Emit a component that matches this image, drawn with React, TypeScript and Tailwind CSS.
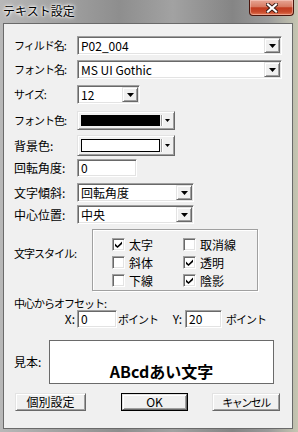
import React from "react";

const sunken =
  "border border-t-[#a0a0a0] border-l-[#a0a0a0] border-r-white border-b-white shadow-[inset_1px_1px_0_#696969,inset_-1px_-1px_0_#e3e3e3]";
const raised =
  "border border-t-[#e3e3e3] border-l-[#e3e3e3] border-r-[#696969] border-b-[#696969] shadow-[inset_1px_1px_0_#ffffff,inset_-1px_-1px_0_#a0a0a0]";
// katakana in MS UI Gothic is narrow, squeeze it a bit
const kana = "text-[11px] tracking-[-1px]";

function Arrow({ small }: { small?: boolean }) {
  if (small) {
    return (
      <svg width="5" height="3" viewBox="0 0 5 3">
        <path d="M0 0h5L2.5 3z" fill="#000" />
      </svg>
    );
  }
  return (
    <svg width="7" height="4" viewBox="0 0 7 4">
      <path d="M0 0h7L3.5 4z" fill="#000" />
    </svg>
  );
}

function Combo({ w, value }: { w: string; value: string }) {
  return (
    <div className={`${w} h-[19px] bg-white ${sunken} p-[1px] flex`}>
      <div className="flex-1 pl-[2px] leading-[15px] overflow-hidden whitespace-nowrap">{value}</div>
      <div className={`w-[16px] bg-[#f0f0f0] ${raised} flex items-center justify-center`}>
        <Arrow />
      </div>
    </div>
  );
}

function Field({ w, value }: { w: string; value: string }) {
  return (
    <div className={`${w} h-[18px] bg-white ${sunken} pl-[3px] leading-[16px] whitespace-nowrap`}>
      {value}
    </div>
  );
}

function ColorPick({ h, swatch }: { h: string; swatch: string }) {
  return (
    <div className={`w-[98px] ${h} bg-[#f0f0f0] ${raised} flex items-stretch pl-[3px] pr-[2px] py-[3px]`}>
      <div className={`flex-1 border border-black ${swatch}`} />
      <div className="ml-[1px] w-[2px] border-l border-[#a0a0a0] bg-white" />
      <div className="w-[9px] flex items-center justify-center">
        <Arrow small />
      </div>
    </div>
  );
}

function Check({ checked }: { checked?: boolean }) {
  return (
    <div className={`w-[13px] h-[13px] shrink-0 bg-white ${sunken} flex items-center justify-center`}>
      {checked && (
        <svg width="7" height="7" viewBox="0 0 7 7">
          <path d="M0 2.5 L2.5 5 L7 0.5 L7 3 L2.5 7 L0 5 Z" fill="#000" />
        </svg>
      )}
    </div>
  );
}

function Row({
  label,
  mt,
  h,
  narrow,
  children,
}: {
  label: string;
  mt: string;
  h: string;
  narrow?: boolean;
  children: React.ReactNode;
}) {
  return (
    <div className={`flex items-center ${mt} ${h}`}>
      <div className={`w-[63px] whitespace-nowrap ${narrow ? kana : ""}`}>{label}</div>
      {children}
    </div>
  );
}

const styles = [
  { label: "太字", checked: true },
  { label: "取消線", checked: false },
  { label: "斜体", checked: false },
  { label: "透明", checked: true },
  { label: "下線", checked: false },
  { label: "陰影", checked: true },
];

export default function App() {
  return (
    <div className="w-[298px] h-[432px] overflow-hidden flex flex-col text-[12px] text-black font-['MS_UI_Gothic','Noto_Sans_CJK_JP',sans-serif] bg-[linear-gradient(90deg,#b8b8b8_0%,#a4a4a4_18%,#8e8e8e_40%,#a2a2a2_58%,#858585_78%,#9a9a9a_90%,#c6c6b2_100%)]">
      {/* title bar */}
      <div className="h-[23px] shrink-0 flex items-start">
        <div className="ml-[3px] mt-[4px] leading-[14px] text-[12px] [text-shadow:0_0_5px_#fff,0_0_3px_#fff,0_0_2px_#fff]">
          テキスト設定
        </div>
        <div className="ml-auto mr-[4px] w-[45px] h-[16px] rounded-b-[4px] border border-t-0 border-[#4a150c] bg-[linear-gradient(180deg,#e7a594_0%,#d77a62_45%,#c13b1f_52%,#c84a2c_80%,#e47c5a_100%)] shadow-[inset_0_0_0_1px_rgba(255,220,210,0.45)] flex items-center justify-center">
          <svg width="12" height="10" viewBox="0 0 12 10">
            <path d="M2 1.5 L10 8.5 M10 1.5 L2 8.5" stroke="#3a1a14" strokeWidth="4" strokeLinecap="square" />
            <path d="M2 1.5 L10 8.5 M10 1.5 L2 8.5" stroke="#ffffff" strokeWidth="2.2" strokeLinecap="square" />
          </svg>
        </div>
      </div>

      {/* frame + client */}
      <div className="flex-1 flex pl-[3px] pr-[5px] pb-[3px]">
        <div className="flex-1 bg-[#f0f0f0] border border-[#6a6a6a] flex flex-col pl-[10px]">
          <Row label="フィルド名:" mt="mt-[12px]" h="h-[19px]" narrow>
            <Combo w="w-[205px]" value="P02_004" />
          </Row>
          <Row label="フォント名:" mt="mt-[5px]" h="h-[19px]" narrow>
            <Combo w="w-[205px]" value="MS UI Gothic" />
          </Row>
          <Row label="サイズ:" mt="mt-[6px]" h="h-[19px]" narrow>
            <Combo w="w-[63px]" value="12" />
          </Row>
          <Row label="フォント色:" mt="mt-[7px]" h="h-[19px]" narrow>
            <ColorPick h="h-[19px]" swatch="bg-black" />
          </Row>
          <Row label="背景色:" mt="mt-[5px]" h="h-[21px]">
            <ColorPick h="h-[21px]" swatch="bg-white" />
          </Row>
          <Row label="回転角度:" mt="mt-[3px]" h="h-[18px]">
            <Field w="w-[60px]" value="0" />
          </Row>
          <Row label="文字傾斜:" mt="mt-[6px]" h="h-[19px]">
            <Combo w="w-[117px]" value="回転角度" />
          </Row>
          <Row label="中心位置:" mt="mt-[3px]" h="h-[19px]">
            <Combo w="w-[117px]" value="中央" />
          </Row>

          {/* text style group */}
          <div className="mt-[5px] flex items-start">
            <div className={`w-[78px] mt-[17px] leading-[14px] whitespace-nowrap ${kana}`}>文字スタイル:</div>
            <div className="w-[166px] h-[62px] border border-[#a0a0a0] shadow-[inset_1px_1px_0_#ffffff,1px_1px_0_#ffffff] pl-[19px] pt-[8px] grid grid-cols-[71px_1fr] auto-rows-[18px]">
              {styles.map((s) => (
                <div key={s.label} className="flex items-start gap-[4px]">
                  <Check checked={s.checked} />
                  <span className="leading-[13px] whitespace-nowrap">{s.label}</span>
                </div>
              ))}
            </div>
          </div>

          <div className={`mt-[5px] h-[14px] leading-[14px] whitespace-nowrap ${kana}`}>中心からオフセット:</div>

          <div className="flex items-center h-[18px]">
            <div className="w-[63px] text-right pr-[2px]">X:</div>
            <Field w="w-[40px]" value="0" />
            <div className={`w-[48px] whitespace-nowrap pl-[1px] ${kana}`}>ポイント</div>
            <div className="w-[20px] text-right pr-[3px]">Y:</div>
            <Field w="w-[37px]" value="20" />
            <div className={`ml-[4px] whitespace-nowrap ${kana}`}>ポイント</div>
          </div>

          <div className="mt-[12px] flex items-center">
            <div className="w-[35px] whitespace-nowrap">見本:</div>
            <div className="w-[225px] h-[44px] bg-white border border-[#6a6a6a] overflow-hidden flex items-end justify-center">
              <span className="text-[16px] font-bold leading-[23px] font-['Noto_Sans_CJK_JP',sans-serif]">
                ABcdあい文字
              </span>
            </div>
          </div>

          <div className="mt-[9px] flex h-[18px]">
            <div className={`ml-[1px] w-[71px] ${raised} bg-[#f0f0f0] flex items-center justify-center leading-[14px]`}>
              個別設定
            </div>
            <div className="ml-[35px] w-[67px] border border-black">
              <div className={`w-full h-full ${raised} bg-[#f0f0f0] flex items-center justify-center leading-[14px]`}>
                OK
              </div>
            </div>
            <div
              className={`ml-[24px] w-[68px] ${raised} bg-[#f0f0f0] flex items-center justify-center leading-[14px] text-[11px] tracking-[-1.5px]`}
            >
              キャンセル
            </div>
          </div>
        </div>
      </div>
    </div>
  );
}
